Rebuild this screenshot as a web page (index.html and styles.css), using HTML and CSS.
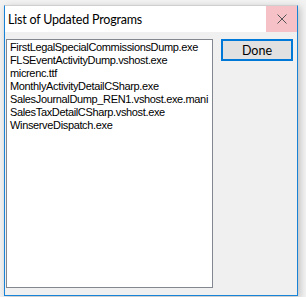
FILE: index.html
```html
<!DOCTYPE html>
<html lang="en">
<head>
    <meta charset="UTF-8">
    <title>List of Updated Programs</title>
    <link rel="stylesheet" href="styles.css">
</head>
<body>
    <div class="window">
        <div class="titlebar">
            <span class="title">List of Updated Programs</span>
            <div class="close">
                <svg width="10" height="10" viewBox="0 0 10 10">
                    <path d="M0.5 0.5 L9.5 9.5 M9.5 0.5 L0.5 9.5" stroke="#555" stroke-width="1" fill="none"/>
                </svg>
            </div>
        </div>
        <div class="client">
            <ul class="listbox">
                <li>FirstLegalSpecialCommissionsDump.exe</li>
                <li>FLSEventActivityDump.vshost.exe</li>
                <li>micrenc.ttf</li>
                <li>MonthlyActivityDetailCSharp.exe</li>
                <li>SalesJournalDump_REN1.vshost.exe.mani</li>
                <li>SalesTaxDetailCSharp.vshost.exe</li>
                <li>WinserveDispatch.exe</li>
            </ul>
            <button class="done">Done</button>
        </div>
    </div>
</body>
</html>
```

FILE: styles.css
```css
* {
    margin: 0;
    padding: 0;
    box-sizing: border-box;
}

body {
    background: #f2f2f2;
    width: 306px;
    height: 297px;
    overflow: hidden;
}

.window {
    width: 294px;
    height: 291px;
    margin: 5px 0 0 4px;
    border: 1px solid #1883d7;
    border-top-color: #cfcfcf;
    background: #f0f0f0;
    box-shadow: 2px 2px 7px rgba(0, 0, 0, 0.22);
    display: flex;
    flex-direction: column;
}

.titlebar {
    height: 26px;
    background: #ffffff;
    display: flex;
    align-items: center;
    justify-content: space-between;
}

.title {
    font-family: Lato, 'Noto Sans', sans-serif;
    font-size: 12.5px;
    letter-spacing: -0.2px;
    color: #000;
    padding-left: 3px;
    padding-top: 1px;
}

.close {
    width: 31px;
    height: 26px;
    background: #f7c1c8;
    display: flex;
    align-items: center;
    justify-content: center;
}

.client {
    display: flex;
    align-items: flex-start;
    gap: 8px;
    padding: 7px 4px 0 1px;
}

.listbox {
    list-style: none;
    width: 207px;
    height: 249px;
    background: #ffffff;
    border: 1px solid #828790;
    padding: 1px 0 0 3px;
    overflow: hidden;
    font-family: 'Liberation Sans', Arial, sans-serif;
    font-size: 11px;
    letter-spacing: -0.35px;
    line-height: 13px;
    color: #000;
    white-space: nowrap;
}

.done {
    width: 72px;
    height: 22px;
    background: #e1e1e1;
    border: 2px solid #0078d7;
    font-family: Lato, 'Noto Sans', sans-serif;
    font-size: 12.5px;
    color: #000;
}
```
